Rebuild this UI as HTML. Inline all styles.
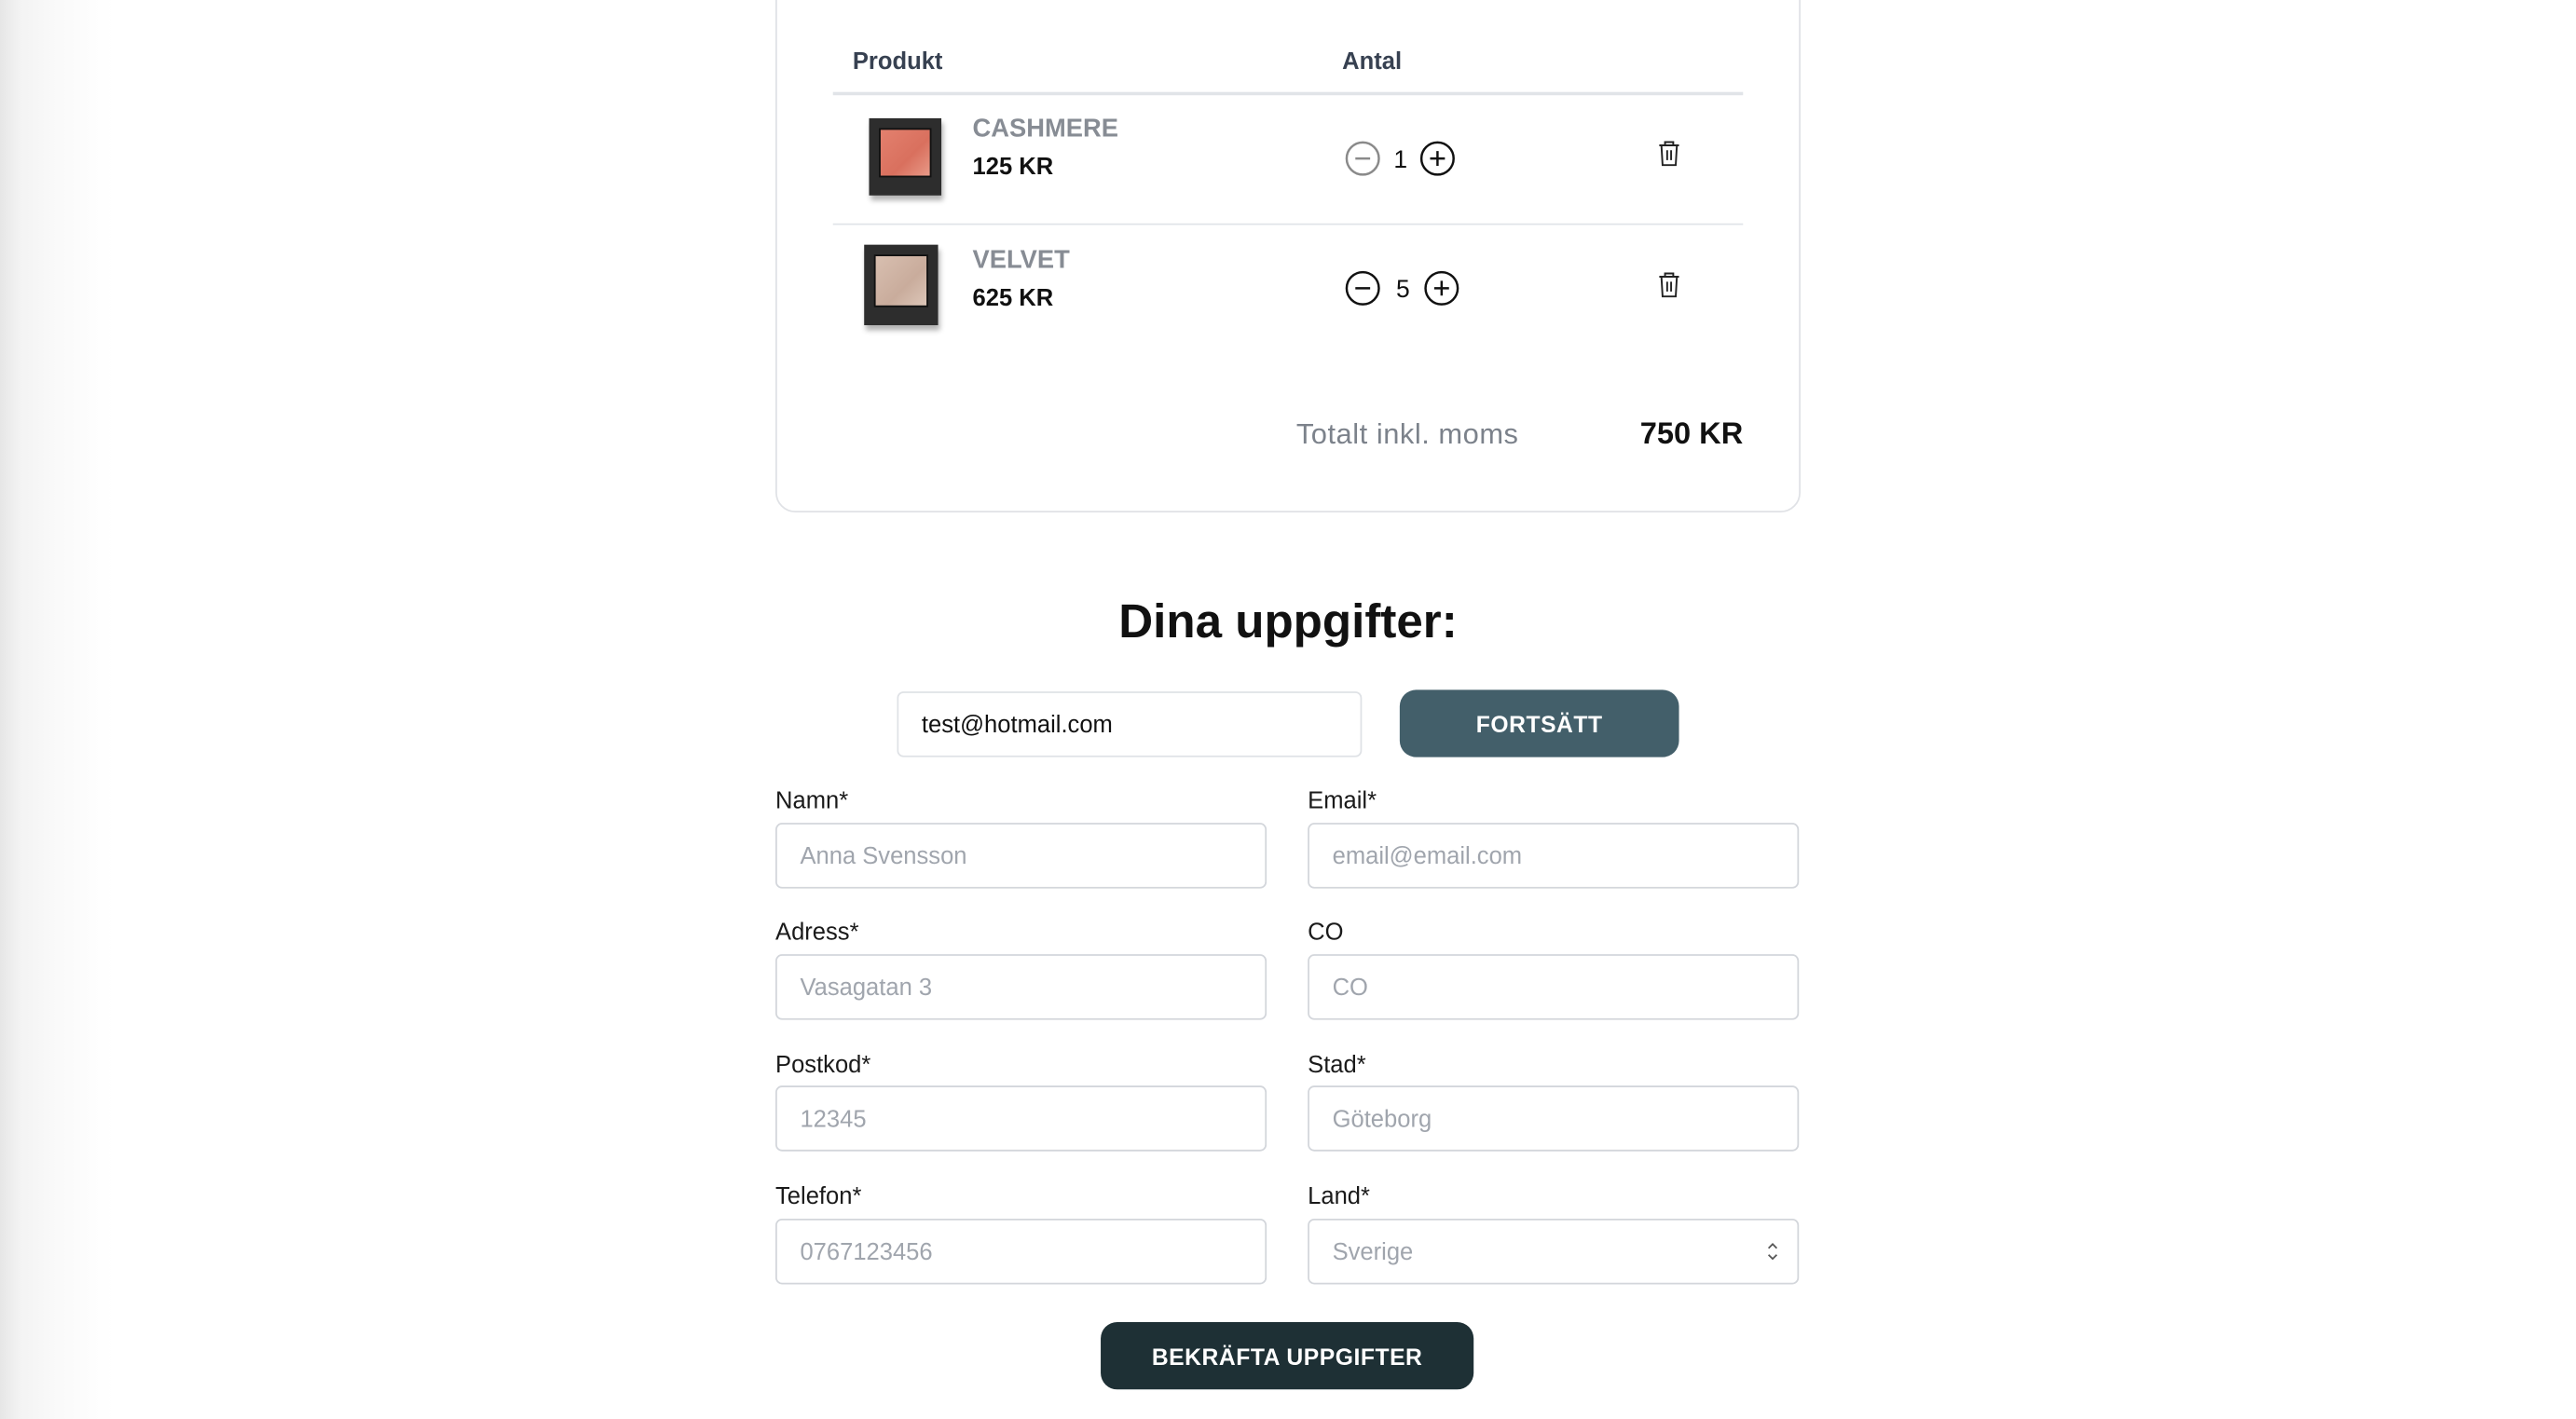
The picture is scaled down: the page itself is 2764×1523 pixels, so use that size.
<!DOCTYPE html>
<html><head><meta charset="utf-8">
<style>
html,body{margin:0;padding:0;width:2764px;height:1522px;overflow:hidden;background:#fff;}
#w{position:absolute;left:0;top:0;width:1568px;height:864px;transform:scale(1.76276);transform-origin:0 0;font-family:"Liberation Sans",Arial,sans-serif;color:#111;}
.a{position:absolute;white-space:nowrap;}
.shade{position:absolute;left:0;top:0;width:70px;height:864px;background:linear-gradient(to right,#e6e6e6 0,#f3f3f3 12px,#fafafa 35px,#fff 70px);}
.card{position:absolute;left:472px;top:-20px;width:622px;height:330px;border:1px solid #e0e2e6;border-radius:12px;background:#fff;}
.hl{position:absolute;left:507px;width:554px;height:1.5px;background:#e1e4e8;}
.th{font-size:14.5px;font-weight:bold;color:#374151;}
.pn{font-size:15.5px;font-weight:bold;color:#878c94;}
.pp{font-size:14.5px;font-weight:bold;color:#111;}
.img{position:absolute;background:#2d2d2d;box-shadow:1px 3px 3px rgba(0,0,0,.3);}
.img i{position:absolute;left:6px;top:6px;right:6px;bottom:11px;border:1px solid #111;}
.inp{position:absolute;height:38px;border:1.5px solid #d3d6db;border-radius:4px;background:#fff;box-sizing:border-box;font-size:14.5px;color:#a0a5ad;line-height:36px;padding-left:14px;}
.lb{font-size:14.5px;color:#1a1a1a;}
.btn{position:absolute;color:#fff;font-weight:bold;font-size:14px;text-align:center;letter-spacing:.3px;}
</style></head><body><div id="w">
<div class="shade"></div>
<div class="card"></div>
<div class="a th" style="left:519px;top:29.5px">Produkt</div>
<div class="a th" style="left:817px;top:29.5px">Antal</div>
<div class="hl" style="top:56px"></div>
<div class="hl" style="top:135.5px"></div>

<div class="img" style="left:529px;top:72px;width:44px;height:47px"><i style="background:linear-gradient(135deg,#e3806e,#d9705e 60%,#e89a88);"></i></div>
<div class="a pn" style="left:592px;top:69.5px">CASHMERE</div>
<div class="a pp" style="left:592px;top:93.5px">125 KR</div>

<div class="img" style="left:526px;top:149px;width:45px;height:49px"><i style="background:linear-gradient(135deg,#d8bfb0,#c9ac9c 60%,#dcc6b8);"></i></div>
<div class="a pn" style="left:592px;top:149.5px">VELVET</div>
<div class="a pp" style="left:592px;top:173.5px">625 KR</div>

<svg class="a" style="left:810px;top:80px" width="90" height="32" viewBox="0 0 90 32">
<circle cx="19.5" cy="16.5" r="9.8" fill="none" stroke="#8a8a8a" stroke-width="1.4"/>
<line x1="15" y1="16.5" x2="24" y2="16.5" stroke="#8a8a8a" stroke-width="1.4"/>
<text x="42.5" y="22" font-family="Liberation Sans" font-size="15" text-anchor="middle" fill="#111">1</text>
<circle cx="65" cy="16.5" r="9.8" fill="none" stroke="#111" stroke-width="1.4"/>
<path d="M60.5 16.5H69.5M65 12V21" stroke="#111" stroke-width="1.4"/>
</svg>
<svg class="a" style="left:810px;top:159px" width="90" height="32" viewBox="0 0 90 32">
<circle cx="19.5" cy="16.5" r="9.8" fill="none" stroke="#111" stroke-width="1.4"/>
<line x1="15" y1="16.5" x2="24" y2="16.5" stroke="#111" stroke-width="1.4"/>
<text x="44" y="22" font-family="Liberation Sans" font-size="15" text-anchor="middle" fill="#111">5</text>
<circle cx="67.5" cy="16.5" r="9.8" fill="none" stroke="#111" stroke-width="1.4"/>
<path d="M63 16.5H72M67.5 12V21" stroke="#111" stroke-width="1.4"/>
</svg>
<svg class="a" style="left:1008px;top:85px" width="16" height="17" viewBox="0 0 16 17">
<path d="M2 3.5H14M5.5 3.5V1.5H10.5V3.5M3.3 3.5L4 15.5H12L12.7 3.5M6.8 6.5V12.5M9.2 6.5V12.5" fill="none" stroke="#222" stroke-width="1.1"/>
</svg>
<svg class="a" style="left:1008px;top:165px" width="16" height="17" viewBox="0 0 16 17">
<path d="M2 3.5H14M5.5 3.5V1.5H10.5V3.5M3.3 3.5L4 15.5H12L12.7 3.5M6.8 6.5V12.5M9.2 6.5V12.5" fill="none" stroke="#222" stroke-width="1.1"/>
</svg>

<div class="a" style="left:789px;top:254px;font-size:17.5px;color:#7c828b;letter-spacing:0.3px">Totalt inkl. moms</div>
<div class="a" style="right:507px;top:253px;font-size:18.5px;font-weight:bold;color:#111">750 KR</div>

<div class="a" style="left:0;width:1568px;text-align:center;top:363px;font-size:29px;font-weight:bold;color:#111">Dina uppgifter:</div>

<div class="inp" style="left:546px;top:421px;width:283px;height:40px;color:#111;line-height:40px;border-color:#dfe2e6">test@hotmail.com</div>
<div class="btn" style="left:852px;top:420px;width:170px;height:41px;line-height:42px;background:#435f6a;border-radius:10px">FORTSÄTT</div>

<div class="a lb" style="left:472px;top:480px">Namn*</div>
<div class="a lb" style="left:796px;top:480px">Email*</div>
<div class="inp" style="left:472px;top:501px;width:299px;height:40px;line-height:40px">Anna Svensson</div>
<div class="inp" style="left:796px;top:501px;width:299px;height:40px;line-height:40px">email@email.com</div>

<div class="a lb" style="left:472px;top:560px">Adress*</div>
<div class="a lb" style="left:796px;top:560px">CO</div>
<div class="inp" style="left:472px;top:581px;width:299px;height:40px;line-height:40px">Vasagatan 3</div>
<div class="inp" style="left:796px;top:581px;width:299px;height:40px;line-height:40px">CO</div>

<div class="a lb" style="left:472px;top:641px">Postkod*</div>
<div class="a lb" style="left:796px;top:641px">Stad*</div>
<div class="inp" style="left:472px;top:661px;width:299px;height:40px;line-height:40px">12345</div>
<div class="inp" style="left:796px;top:661px;width:299px;height:40px;line-height:40px">Göteborg</div>

<div class="a lb" style="left:472px;top:721px">Telefon*</div>
<div class="a lb" style="left:796px;top:721px">Land*</div>
<div class="inp" style="left:472px;top:742px;width:299px;height:40px;line-height:40px">0767123456</div>
<div class="inp" style="left:796px;top:742px;width:299px;height:40px;line-height:40px">Sverige</div>
<svg class="a" style="left:1073px;top:755px" width="12" height="14" viewBox="0 0 12 14"><path d="M3.5 5L6 2.5L8.5 5M3.5 9L6 11.5L8.5 9" fill="none" stroke="#555" stroke-width="1"/></svg>

<div class="btn" style="left:670px;top:805px;width:227px;height:41px;line-height:42px;background:#1e3035;border-radius:10px">BEKRÄFTA UPPGIFTER</div>
</div></body></html>
